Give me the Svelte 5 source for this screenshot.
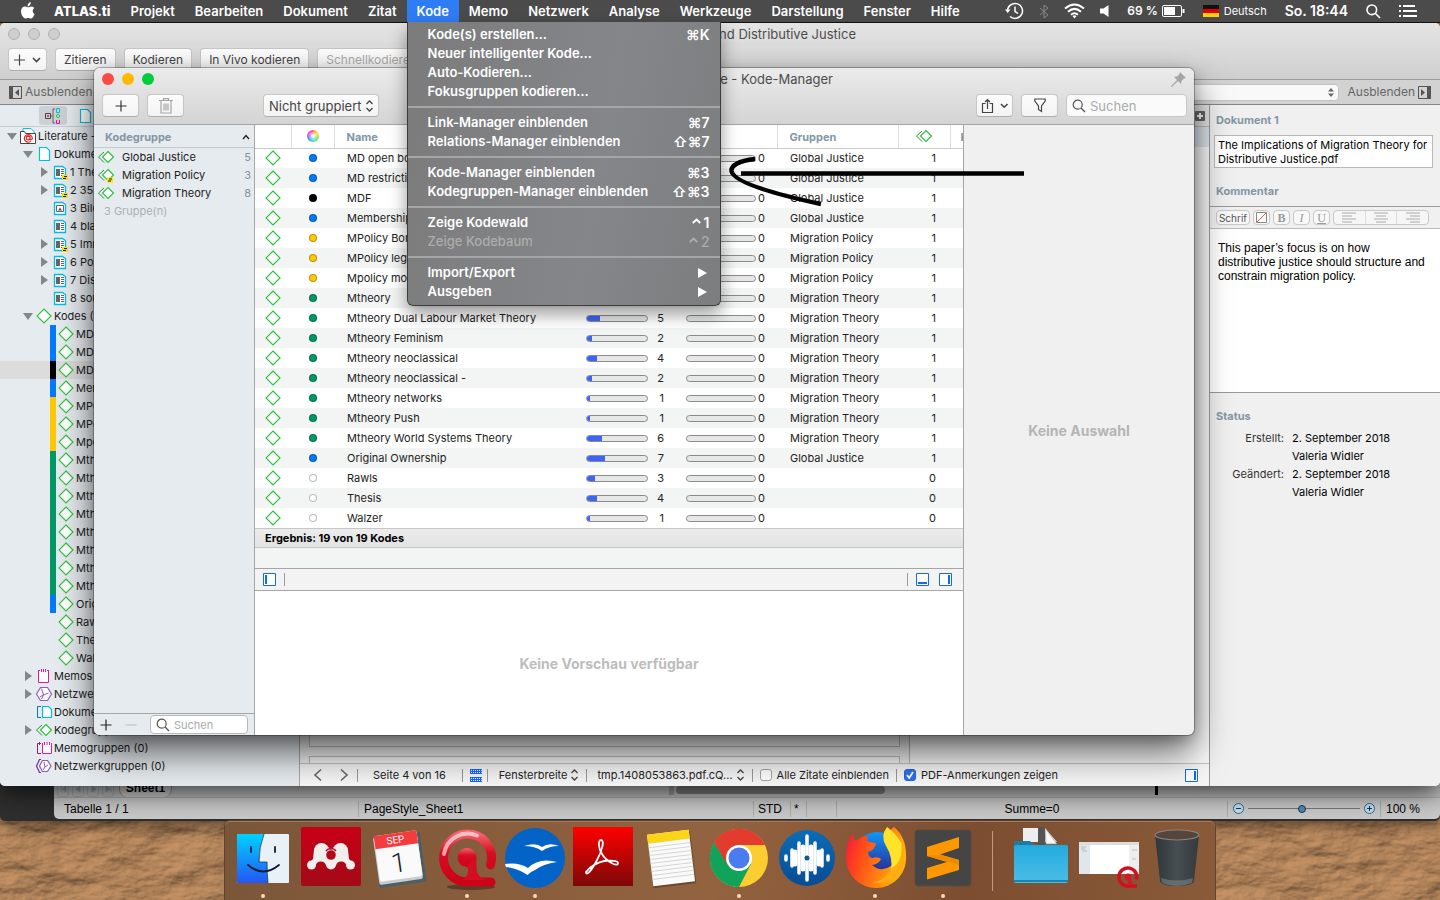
<script>
  const menusLeft = ['Projekt', 'Bearbeiten', 'Dokument', 'Zitat'];
  const menusRight = ['Memo', 'Netzwerk', 'Analyse', 'Werkzeuge', 'Darstellung', 'Fenster', 'Hilfe'];

  const menuGroups = [
    [
      { label: 'Kode(s) erstellen…', key: '⌘K' },
      { label: 'Neuer intelligenter Kode…' },
      { label: 'Auto-Kodieren…' },
      { label: 'Fokusgruppen kodieren…' }
    ],
    [
      { label: 'Link-Manager einblenden', key: '⌘7' },
      { label: 'Relations-Manager einblenden', key: '⇧⌘7' }
    ],
    [
      { label: 'Kode-Manager einblenden', key: '⌘3' },
      { label: 'Kodegruppen-Manager einblenden', key: '⇧⌘3' }
    ],
    [
      { label: 'Zeige Kodewald', caret: true, key: '1' },
      { label: 'Zeige Kodebaum', caret: true, key: '2', disabled: true }
    ],
    [
      { label: 'Import/Export', sub: true },
      { label: 'Ausgeben', sub: true }
    ]
  ];

  const blue = '#007aff';
  const green = '#009966';
  const yellow = '#ffc800';
  const GJ = 'Global Justice';
  const MP = 'Migration Policy';
  const MT = 'Migration Theory';

  const codes = [
    { name: 'MD open borders', color: blue, n: 5, group: GJ },
    { name: 'MD restrictions', color: blue, n: 4, group: GJ },
    { name: 'MDF', color: '#000000', n: 3, group: GJ },
    { name: 'Membership', color: blue, n: 2, group: GJ },
    { name: 'MPolicy Borders', color: yellow, n: 3, group: MP },
    { name: 'MPolicy legal', color: yellow, n: 2, group: MP },
    { name: 'Mpolicy moral', color: yellow, n: 4, group: MP },
    { name: 'Mtheory', color: green, n: 3, group: MT },
    { name: 'Mtheory Dual Labour Market Theory', color: green, n: 5, group: MT },
    { name: 'Mtheory Feminism', color: green, n: 2, group: MT },
    { name: 'Mtheory neoclassical', color: green, n: 4, group: MT },
    { name: 'Mtheory neoclassical -', color: green, n: 2, group: MT },
    { name: 'Mtheory networks', color: green, n: 1, group: MT },
    { name: 'Mtheory Push', color: green, n: 1, group: MT },
    { name: 'Mtheory World Systems Theory', color: green, n: 6, group: MT },
    { name: 'Original Ownership', color: blue, n: 7, group: GJ },
    { name: 'Rawls', color: '', n: 3, group: '' },
    { name: 'Thesis', color: '', n: 4, group: '' },
    { name: 'Walzer', color: '', n: 1, group: '' }
  ];

  const tree = [
    { level: 0, open: true, icon: 'project', label: 'Literature -' },
    { level: 1, open: true, icon: 'doc', label: 'Dokumente' },
    { level: 2, open: false, icon: 'pdfnote', label: '1 The' },
    { level: 2, open: false, icon: 'pdfnote', label: '2 35' },
    { level: 2, icon: 'image', label: '3 Bild' },
    { level: 2, icon: 'pdf', label: '4 blank' },
    { level: 2, open: false, icon: 'pdfnote', label: '5 Imm' },
    { level: 2, open: false, icon: 'pdf', label: '6 Pol' },
    { level: 2, open: false, icon: 'pdf', label: '7 Dist' },
    { level: 2, icon: 'pdf', label: '8 sou' },
    { level: 1, open: true, icon: 'code', label: 'Kodes (19)' },
    ...codes.map((c) => ({ code: true, icon: 'code', label: c.name, color: c.color, selected: c.name === 'MDF' })),
    { level: 1, open: false, icon: 'memo', label: 'Memos' },
    { level: 1, open: false, icon: 'network', label: 'Netzwerke' },
    { level: 1, icon: 'docgroup', label: 'Dokumentgruppen' },
    { level: 1, open: false, icon: 'codegroup', label: 'Kodegruppen (3)' },
    { level: 1, icon: 'memogroup', label: 'Memogruppen (0)' },
    { level: 1, icon: 'netgroup', label: 'Netzwerkgruppen (0)' }
  ];

  const groups = [
    { name: GJ, n: 5 },
    { name: MP, n: 3, note: true },
    { name: MT, n: 8 }
  ];

  const note = 'This paper’s focus is on how\ndistributive justice should structure and\nconstrain migration policy.';

  const dock = ['finder', 'mendeley', 'calendar', 'atlas', 'office', 'acrobat', 'notes', 'chrome', 'audio', 'firefox', 'sublime'];
  const running = ['finder', 'atlas', 'office', 'chrome', 'firefox', 'sublime'];
  const dockRight = ['folder', 'minimized', 'trash'];
</script>

{#snippet icon(kind)}
  <svg class="ico" width="18" height="18" viewBox="0 0 18 18" fill="none" stroke-width="1" aria-hidden="true">
    {#if kind === 'code'}
      <path d="M9 2 L16 9 L9 16 L2 9Z" fill="#fff" stroke="#2fc13c" stroke-width="1.1" />
    {:else if kind === 'codegroup' || kind === 'codegroupnote'}
      <path d="M7 4 L1.500 9 L7 14.500" stroke="#24903a" />
      <path d="M11 3.500 L16.500 9 L11 14.500 L5.500 9Z" fill="#fff" stroke="#2fc13c" stroke-width="1.200" />
      {#if kind === 'codegroupnote'}
        <path d="M10 11.500h6v5h-6z" fill="#ffe600" /><path d="M12 13h3M11 15h3" stroke="#222" />
      {/if}
    {:else if kind === 'project'}
      <path d="M4 6V1.500h8l3 3V6" fill="#fff" stroke="#00bfe6" />
      <path d="M1.500 16.500v-12h4l1 2h10v10z" fill="#fff" stroke="#444" />
      <path d="M12 14.200a4 3.800 0 1 1 1.300-3q0 1.500-1.200 1.500t-1-1.200V9.500M11 11a1.900 1.900 0 1 1-3.800 0 1.900 1.900 0 0 1 3.800 0" stroke="#e01818" stroke-width="1.100" />
    {:else if kind === 'doc'}
      <path d="M4.500 2.500h7l3 3v10h-10z" fill="#fff" stroke="#00bfe6" stroke-width="1.200" />
    {:else if kind === 'pdf' || kind === 'pdfnote'}
      <path d="M3.500 3.500h8l3 2v10h-11z" fill="#fff" stroke="#00bfe6" stroke-width="1.300" />
      <path d="M5 6h4v7h-4z" fill="#666" /><path d="M10 6.500h3M10 8.500h3M10 10.500h3M10 12.500h3" stroke="#666" />
      {#if kind === 'pdfnote'}
        <path d="M11 12h6v5h-6z" fill="#ffe600" /><path d="M13 13.500h3M12 15.500h3" stroke="#222" />
      {/if}
    {:else if kind === 'image'}
      <path d="M3.500 3.500h8l3 2v10h-11z" fill="#fff" stroke="#00bfe6" stroke-width="1.300" />
      <path d="M5.500 6.500h7v6h-7z" stroke="#666" /><path d="M7 11.500l2-3 2 3z" fill="#555" />
    {:else if kind === 'memo'}
      <path d="M3.500 3.500v12h10v-12M3 3.500h2M12 3.500h2M6.500 2v3M8.500 2v3M10.500 2v3" fill="#fff" stroke="#e0189a" />
    {:else if kind === 'network'}
      <path d="M5.500 2.500h7l4 6.500-4 6.500h-7L1.500 9z" fill="#fff" stroke="#8f5bbd" stroke-width="1.200" />
      <path d="M6.500 3.500l2 6.500M8.500 10l5-2M8.500 10l-2 4M5 12l3-2" stroke="#8f5bbd" />
    {:else if kind === 'docgroup'}
      <path d="M6 3.500H2.500v11H6" stroke="#087f9c" /><path d="M7.500 3.500h6l3 3v8h-9z" fill="#fff" stroke="#00bfe6" stroke-width="1.200" />
    {:else if kind === 'memogroup'}
      <path d="M6 4.500H2.500v10H6M4.500 3v3" stroke="#a01870" /><path d="M7.500 4v10.500h9V4M9.500 3v3M12 3v3M14.500 3v3" fill="#fff" stroke="#e0189a" />
    {:else if kind === 'netgroup'}
      <path d="M6 2.500H4.500L1.500 9l3 6.500H6" stroke="#6a2f96" stroke-width="1.200" />
      <path d="M7.500 3.500h5l3.500 5.500-3.500 5.500h-5L4.500 9z" fill="#fff" stroke="#8f5bbd" stroke-width="1.200" /><path d="M9 5l1 5 3-2M10 10l-2 3" stroke="#8f5bbd" />
    {/if}
  </svg>
{/snippet}

{#snippet chevrons()}
  <svg class="chev" width="9" height="14" viewBox="0 0 9 14" fill="none" stroke="#444" stroke-width="1.300" aria-hidden="true"><path d="M1.500 5L4.500 2l3 3M1.500 9l3 3 3-3" /></svg>
{/snippet}

{#snippet magnifier()}
  <svg width="14" height="14" viewBox="0 0 14 14" fill="none" stroke="#555" stroke-width="1.200" aria-hidden="true"><circle cx="5.700" cy="5.700" r="4.500" /><path d="M9 9l4 4" /></svg>
{/snippet}

{#snippet pane(kind)}
  <svg width="13" height="13" viewBox="0 0 13 13" fill="none" stroke="#1269f4" aria-hidden="true">
    <path d="M.5.5h12v12H.5z" fill="#fff" />
    {#if kind === 'left'}<path d="M3 2v9" stroke-width="2" />{:else if kind === 'bottom'}<path d="M2 10h9" stroke-width="2" />{:else}<path d="M10 2v9" stroke-width="2" />{/if}
  </svg>
{/snippet}

{#snippet app(kind)}
  <svg width="68" height="79" viewBox="0 0 68 79" aria-hidden="true">
    {#if kind === 'finder'}
      <rect x="8" y="13" width="52" height="49" rx="1" fill="#e8f0f8" />
      <path d="M9 13h26q-5 13-5 28h8q0 12 1 21H9q-1 0-1-1V14q0-1 1-1z" fill="url(#gFinder)" />
      <path d="M35 13q-5 13-5 28h8q0 12 1 21" fill="none" stroke="#17375e" stroke-width=".8" />
      <path d="M22 26v5M46 26v5M19 44q15 13 31 0" fill="none" stroke="#0c1c33" stroke-width="1.800" stroke-linecap="round" />
    {:else if kind === 'mendeley'}
      <rect x="4" y="6" width="60" height="59" rx="2" fill="url(#gMend)" />
      <g fill="#f1eeee"><circle cx="24.500" cy="29.500" r="7.500" /><circle cx="43.500" cy="29.500" r="7.500" /><circle cx="14.500" cy="44" r="4.500" /><circle cx="34" cy="43.500" r="5" /><circle cx="53.500" cy="44" r="4.500" /><path d="M17 29L16 38l-3 3 5 5q1-5 5-5.500 5-.5 6 4h10q1-4.500 6-4 4 .5 5 5.500l5-5-3-3-1-9-9-6-8 5-8-5z" /></g>
      <circle cx="34" cy="34" r="4.800" fill="#b4081a" />
      <path d="M29 30q2-3 5-2 3-1 5 2" fill="none" stroke="#b4081a" stroke-width="1.500" />
    {:else if kind === 'calendar'}
      <g transform="rotate(-8 34 37)"><rect x="11" y="14" width="47" height="50" fill="#4e5e66" /><rect x="11" y="13" width="44" height="48" rx="2" fill="#c8ccce" /><rect x="12" y="12" width="43" height="46" rx="2" fill="#fafafa" /><path d="M12 12h43v13H12z" fill="#f53b3e" /><text x="33" y="22" class="cal-month">SEP</text><text x="33" y="51" class="cal-day">1</text></g>
    {:else if kind === 'atlas'}
      <ellipse cx="38" cy="66" rx="24" ry="3" fill="#0005" />
      <path d="M57.500 44A24 24 0 1 0 34 61H58" fill="none" stroke="url(#gAtlas)" stroke-width="9" stroke-linecap="round" stroke-linejoin="round" />
      <circle cx="34" cy="36.500" r="9.500" fill="url(#gAtlas)" /><path d="M34 45q4 8-5 14h27q-12-1-12.500-12V36z" fill="#d50d22" />
      <path d="M11 33A24 24 0 0 1 44 14.500" fill="none" stroke="#fff9" stroke-width="4" stroke-linecap="round" />
    {:else if kind === 'office'}
      <circle cx="34" cy="37" r="30" fill="#0463c6" />
      <path d="M4 43Q18 41 27 47 38 36 56 41 42 43 34 49 29 51 26.500 54 18 48 5 46zM23 25Q35 21 41 26 48 21 58 25 48 25 41 30 34 25 23 25z" fill="#fff" />
    {:else if kind === 'acrobat'}
      <rect x="4" y="6" width="60" height="59" fill="url(#gAcro)" />
      <path d="M17 51c4-6 13-10 18-11 8-1 14 0 14 2 0 5-12-2-16-9-4-6-4-14-1-14 4 0 1 11-4 20-5 10-11 17-11 12z" fill="none" stroke="#fff" stroke-width="1.800" />
    {:else if kind === 'notes'}
      <g transform="rotate(-7 34 37)"><rect x="13" y="13" width="43" height="52" fill="#0004" /><rect x="13" y="11" width="42" height="52" fill="#fafafa" /><path d="M13 24h42M13 28h42M13 32h42M13 36h42M13 40h42M13 44h42M13 48h42M13 52h42M13 56h42" stroke="#d4d5d5" stroke-width="1" /><path d="M13 11h42v9H13z" fill="#f9d417" /></g>
    {:else if kind === 'chrome'}
      <circle cx="34" cy="37" r="29" fill="#fbcd31" />
      <path d="M34 37L9 22A29 29 0 0 1 60 24H34z" fill="#e33b2e" /><path d="M9 22A29 29 0 0 0 34 66L46 43 34 37 21 41z" fill="#12a35b" /><path d="M9 22l13 22 10-10z" fill="#e33b2e" /><path d="M9 22l13 22" stroke="#12a35b" /><circle cx="34" cy="37" r="13" fill="#fff" /><circle cx="34" cy="37" r="10.500" fill="#4a7cf0" />
    {:else if kind === 'audio'}
      <circle cx="34" cy="37" r="28" fill="url(#gAudio)" />
      <path d="M13 35v4M19 29v16M26 22v30M34 15v44M42 22v30M49 29v16M55 35v4" stroke="#fff" stroke-width="3.500" stroke-linecap="round" /><path d="M30 26v22M38 26v22M22 31v12M46 31v12" stroke="#fff" stroke-width="5" stroke-linecap="round" /><circle cx="34" cy="37" r="2.500" fill="#0c58a2" />
    {:else if kind === 'firefox'}
      <circle cx="36" cy="36" r="25" fill="url(#gGlobe)" />
      <path d="M12 12q0 7 3 8 5-5 12-5l-1 5q5 2 9 2-1 7-8 9 0 5 4 6 6-2 9 1-2 5-9 6 9 8 19 1 11-10 2-26-6-9 1-13 12 10 12 28A30 30 0 0 1 35 67 30 30 0 0 1 5 37q0-16 7-25z" fill="url(#gFox)" />
      <path d="M46 6q-7 9-1 19 7 11 5 24 12-7 11-26Q55 12 46 6z" fill="#ffe32b" /><path d="M51 47q12-7 9-25 7 18-3 32-11 11-27 7 14 0 21-14z" fill="#ffad13" />
    {:else if kind === 'sublime'}
      <rect x="6" y="9" width="56" height="56" rx="3" fill="#454545" stroke="#5c4a3d" />
      <path d="M18 26L50 16V27L31 33.500 50 39V49L18 58.500V47L38 41 18 35z" fill="#ff9800" /><path d="M31 33.500L50 39v5L18 35z" fill="#f08a00" />
    {:else if kind === 'folder'}
      <path d="M16 7h22l12 14H16z" fill="#eee" /><path d="M31 6h7v18h-7z" fill="#555" /><path d="M38 7l12 16H39z" fill="#f8f8f8" stroke="#888" stroke-width=".6" />
      <path d="M7 22q0-2 2-2h14l4 4h32q2 0 2 2v8H7z" fill="#217b9e" /><rect x="7" y="24" width="54" height="38" rx="2" fill="url(#gFolder)" /><path d="M7 60h54" stroke="#1887af" stroke-width="2" />
    {:else if kind === 'minimized'}
      <path d="M4 21h60v32H4z" fill="#fff" /><path d="M4 21h60v3H4z" fill="#ddd" /><path d="M4 24h11v29H4z" fill="#dfe7ec" /><path d="M54 24h10v29H54z" fill="#eee" /><path d="M6 26h5M6 28h4M7 30h5M57 29h5M57 38h4" stroke="#aaa" stroke-width=".7" />
      <path d="M61.500 58.500A9 9 0 1 0 53 65h9" fill="none" stroke="#cf1021" stroke-width="3.500" /><circle cx="53" cy="56" r="3.500" fill="#d91528" /><path d="M53 57q2 5-3 7h9q-3-2-3-7z" fill="#d91528" />
    {:else if kind === 'trash'}
      <path d="M12 14l5 46q1 5 17 5t17-5l5-46z" fill="url(#gTrash)" /><ellipse cx="34" cy="14" rx="22" ry="5" fill="#54453d" stroke="#8a8580" stroke-width="1.200" /><path d="M18 57q16 5 32 0l-1 5q-15 6-30 0z" fill="#8b979a" opacity=".45" />
    {/if}
  </svg>
{/snippet}

<main class="desktop">
  <svg class="wallpaper" aria-hidden="true" preserveAspectRatio="none">
    <defs>
      <filter id="rock" x="0" y="0" width="100%" height="100%" color-interpolation-filters="sRGB">
        <feTurbulence type="fractalNoise" baseFrequency=".022 .04" numOctaves="5" seed="21" result="n" />
        <feDiffuseLighting in="n" surfaceScale="4" lighting-color="#bd8c60" diffuseConstant="1.05"><feDistantLight azimuth="235" elevation="62" /></feDiffuseLighting>
      </filter>
      <linearGradient id="gFinder" x2="0" y2="1"><stop stop-color="#00d2ff" /><stop offset="1" stop-color="#2456f4" /></linearGradient>
      <linearGradient id="gMend" x2="0" y2="1"><stop stop-color="#c90017" /><stop offset="1" stop-color="#a20a17" /></linearGradient>
      <linearGradient id="gAtlas" x2="0" y2="1"><stop stop-color="#f4626d" /><stop offset=".4" stop-color="#d50d22" /><stop offset="1" stop-color="#cc0218" /></linearGradient>
      <linearGradient id="gAcro" x2="0" y2="1"><stop stop-color="#ff0000" /><stop offset="1" stop-color="#7c0808" /></linearGradient>
      <linearGradient id="gAudio" x2="0" y2="1"><stop stop-color="#0b6db5" /><stop offset="1" stop-color="#084c94" /></linearGradient>
      <linearGradient id="gGlobe" x2="0" y2="1"><stop stop-color="#1296f5" /><stop offset="1" stop-color="#30107c" /></linearGradient>
      <linearGradient id="gFox" x2="1" y2=".3"><stop stop-color="#f5123f" /><stop offset=".35" stop-color="#ff4a1a" /><stop offset="1" stop-color="#ffb10a" /></linearGradient>
      <linearGradient id="gFolder" x2="0" y2="1"><stop stop-color="#22abdf" /><stop offset="1" stop-color="#4dbde6" /></linearGradient>
      <linearGradient id="gTrash" x2="1" y2="0"><stop stop-color="#30373b" /><stop offset=".5" stop-color="#474e52" /><stop offset="1" stop-color="#33393d" /></linearGradient>
    </defs>
    <rect width="100%" height="100%" fill="#a67b51" />
    <rect width="100%" height="100%" filter="url(#rock)" />
  </svg>

  <div class="backdrop"></div>

  <section class="sheet-window" aria-label="Tabelle">
    <div class="sheet-tabs">
      {#each ['M3 3v6M8 3v6L4 6z', 'M7 3v6L3 6z', 'M4 3v6l4-3z', 'M8 3v6M3 3v6l4-3z'] as d}<span class="nav"><svg width="10" height="12" viewBox="0 0 10 12" fill="#999" stroke="#999" stroke-width=".8"><path {d} /></svg></span>{/each}
      <b class="tab">Sheet1</b>
      <span class="hscroll"><i></i></span>
      <span class="split"></span>
    </div>
    <footer class="sheet-status">
      <span class="s-table">Tabelle 1 / 1</span>
      <span class="s-style">PageStyle_Sheet1</span>
      <span class="s-std">STD</span>
      <span class="s-star">*</span>
      <span class="s-gap"></span>
      <span class="s-sum">Summe=0</span>
      <span class="s-zoom">
        <button class="round" aria-label="Verkleinern"><svg width="9" height="9" viewBox="0 0 9 9" stroke="#135"><path d="M2 4.500h5" /></svg></button>
        <input type="range" aria-label="Zoom" min="0" max="100" value="48" />
        <button class="round" aria-label="Vergrößern"><svg width="9" height="9" viewBox="0 0 9 9" stroke="#135"><path d="M2 4.500h5M4.500 2v5" /></svg></button>
      </span>
      <span class="s-pct">100 %</span>
    </footer>
  </section>

  <section class="window main-window" aria-label="Dokument">
    <header class="main-head">
      <div class="title-row"><span class="lights off"><i></i><i></i><i></i></span><h1>Theory and Distributive Justice</h1></div>
      <div class="tools">
        <button class="btn add" aria-label="Hinzufügen"><svg width="30" height="14" viewBox="0 0 30 14" fill="none" stroke="#444"><path d="M1 7h11M6.500 1.500v11" stroke-width="1.200" /><path d="M20 5l3.500 3.500L27 5" stroke-width="1.600" /></svg></button>
        <button class="btn">Zitieren</button>
        <button class="btn">Kodieren</button>
        <button class="btn">In Vivo kodieren</button>
        <button class="btn" disabled>Schnellkodieren</button>
      </div>
    </header>
    <div class="doc-bar">
      <button class="hide"><svg width="13" height="13" viewBox="0 0 13 13"><path d="M.5.5h12v12H.5z" fill="none" stroke="#555" /><path d="M0 0h4v13H0zM10 3v7L6 6.500z" fill="#555" /></svg>Ausblenden</button>
      <select class="doc-select" aria-label="Dokument wählen"><option></option></select>
      <button class="hide right">Ausblenden<svg width="13" height="13" viewBox="0 0 13 13"><path d="M.5.5h12v12H.5z" fill="none" stroke="#555" /><path d="M9 0h4v13H9zM3 3v7l4-3.500z" fill="#555" /></svg></button>
    </div>
    <div class="main-body">
      <nav class="tree-pane" aria-label="Projektbaum">
        <div class="tree-tabs">
          <span class="tree-tab on"><svg width="16" height="16" viewBox="0 0 16 16" fill="none"><path d="M.5 5.500h5v5h-5z" stroke="#444" /><circle cx="3" cy="8" r="1" fill="#e01818" /><path d="M6 8h2M10 1H8v14h2" stroke="#666" /><path d="M11.500.5h3v4h-3z" stroke="#00bfe6" /><path d="M13 6l2 2-2 2-2-2z" stroke="#2fc13c" /><path d="M11.500 12v3.500h3V12" stroke="#e0189a" /></svg></span>
          <span class="tree-tab">{@render icon('doc')}</span>
        </div>
        <ul class="tree">
          {#each tree as t}
            <li class:selected={t.selected} class={t.code ? 'leaf' : 'lv' + t.level}>
              {#if t.code}
                <span class="strip" style:background={t.color || 'transparent'}></span>
              {:else}
                <span class="disc">{#if t.open === true}<svg width="10" height="9" viewBox="0 0 10 9"><path d="M0 1h10L5 8z" fill="#858789" /></svg>{:else if t.open === false}<svg width="9" height="10" viewBox="0 0 9 10"><path d="M1 0v10l7-5z" fill="#858789" /></svg>{/if}</span>
              {/if}
              <span class="tico">{@render icon(t.icon)}</span><span>{t.label}</span>
            </li>
          {/each}
        </ul>
      </nav>

      <div class="doc-pane">
        <div class="doc-view">
          <div class="pages"><div class="page tall"></div><div class="page"></div></div>
          <div class="margin">
            <div class="margin-head"><svg width="10" height="10" viewBox="0 0 10 10"><rect width="10" height="10" rx="1" fill="#666" /><path d="M5 2v6M2 5h6" stroke="#fff" stroke-width="2" /></svg></div>
            <div class="margin-sel"></div>
          </div>
        </div>
        <footer class="doc-status">
          <button class="arrow" aria-label="Vorherige Seite"><svg width="9" height="14" viewBox="0 0 9 14" fill="none" stroke="#666" stroke-width="1.600"><path d="M8 1.500L2 7l6 5.500" /></svg></button>
          <button class="arrow" aria-label="Nächste Seite"><svg width="9" height="14" viewBox="0 0 9 14" fill="none" stroke="#666" stroke-width="1.600"><path d="M1 1.500L7 7l-6 5.500" /></svg></button>
          <span class="cell pg">Seite 4 von 16</span>
          <span class="cell fit"><svg width="12" height="13" viewBox="0 0 12 13"><path d="M0 0h12v5H0zM0 8h12v5H0z" fill="#1269f4" /><path d="M1 1.500h11M1 3.500h11M1 9.500h11M1 11.500h11" stroke="#fff" stroke-dasharray="1 1" /></svg></span>
          <button class="cell wide">Fensterbreite {@render chevrons()}</button>
          <button class="cell file"><span>tmp.1408053863.pdf.cQ...</span>{@render chevrons()}</button>
          <label class="cell chk"><input type="checkbox" />Alle Zitate einblenden</label>
          <label class="cell chk"><input type="checkbox" checked />PDF-Anmerkungen zeigen</label>
          <span class="push">{@render pane('right')}</span>
        </footer>
      </div>

      <aside class="inspector">
        <h2><label for="docname">Dokument 1</label></h2>
        <textarea id="docname" rows="2" value="The Implications of Migration Theory for Distributive Justice.pdf"></textarea>
        <h2 class="comment-head"><label for="comment">Kommentar</label></h2>
        <div class="format">
          <button class="fbtn font">Schrif</button>
          <button class="fbtn" aria-label="Farbe"><svg width="11" height="11" viewBox="0 0 11 11" fill="#fff" stroke="#888"><path d="M.5.5h10v10H.5z" /><path d="M1 10l9-9" stroke="#e55" /></svg></button>
          <button class="fbtn ser"><b>B</b></button>
          <button class="fbtn ser"><i>I</i></button>
          <button class="fbtn ser"><u>U</u></button>
          <span class="aligns">
            {#each ['M1 1h14M1 4h10M1 7h14M1 10h10', 'M1 1h14M3 4h10M1 7h14M3 10h10', 'M1 1h14M5 4h10M1 7h14M5 10h10'] as d, i}
              <button aria-label={['Links', 'Mitte', 'Rechts'][i]}><svg width="16" height="11" viewBox="0 0 16 11" stroke="#aaa"><path {d} /></svg></button>
            {/each}
          </span>
        </div>
        <textarea id="comment" class="comment" value={note}></textarea>
        <div class="status">
          <h2>Status</h2>
          <dl>
            <dt>Erstellt:</dt><dd>2. September 2018</dd><dd>Valeria Widler</dd>
            <dt>Geändert:</dt><dd>2. September 2018</dd><dd>Valeria Widler</dd>
          </dl>
        </div>
      </aside>
    </div>
  </section>

  <section class="window manager" aria-label="Kode-Manager">
    <header class="mgr-head">
      <div class="title-row"><span class="lights"><i></i><i></i><i></i></span><h1>Literature - Kode-Manager</h1>
        <svg class="pin" width="15" height="15" viewBox="0 0 15 15" fill="#a5a5a5"><path d="M9 0l6 6-2 .5-2.500 2.500-.5 3-3-3L.8 15 0 14.200 6 8 3 5l3-.5L8.500 2z" /></svg>
      </div>
      <div class="tools">
        <button class="btn w37" aria-label="Neuer Kode"><svg width="12" height="12" viewBox="0 0 12 12" stroke="#333" stroke-width="1.200"><path d="M.5 6h11M6 .5v11" /></svg></button>
        <button class="btn w37" aria-label="Löschen"><svg width="14" height="16" viewBox="0 0 14 16" fill="none" stroke="#a5a5a5" stroke-width="1.200"><path d="M0 2.500h14M4.500 2V.600h5V2M2 2.500V15h10V2.500M5 5.500v7M7 5.500v7M9 5.500v7" /></svg></button>
        <button class="btn group-by">Nicht gruppiert {@render chevrons()}</button>
        <span class="grow"></span>
        <button class="btn w37" aria-label="Teilen"><svg width="28" height="16" viewBox="0 0 28 16" fill="none" stroke="#444"><path d="M4.500 5.500h-3v9h10v-9h-3M6.500 11V1.500M4 4l2.500-2.500L9 4" stroke-width="1.200" /><path d="M20 6l3.200 3.200L26.500 6" stroke-width="1.600" /></svg></button>
        <button class="btn w37" aria-label="Filter"><svg width="12" height="15" viewBox="0 0 12 15" fill="none" stroke="#444" stroke-width="1.200"><path d="M.8 1h10.400v2L7.500 8v5.500l-3-2V8L.8 3z" /></svg></button>
        <label class="search">{@render magnifier()}<input type="search" placeholder="Suchen" aria-label="Kodes suchen" /></label>
      </div>
    </header>
    <div class="mgr-body">
      <aside class="groups">
        <div class="groups-head">Kodegruppe<svg width="8" height="6" viewBox="0 0 8 6" fill="none" stroke="#222" stroke-width="1.400"><path d="M1 5l3-3.500L7 5" /></svg></div>
        <ul>
          {#each groups as g}
            <li>{@render icon(g.note ? 'codegroupnote' : 'codegroup')}<span>{g.name}</span><em>{g.n}</em></li>
          {/each}
          <li class="count">3 Gruppe(n)</li>
        </ul>
        <footer>
          <button aria-label="Gruppe hinzufügen"><svg width="12" height="12" viewBox="0 0 12 12" stroke="#222" stroke-width="1.200"><path d="M.5 6h11M6 .5v11" /></svg></button>
          <button aria-label="Gruppe entfernen"><svg width="12" height="12" viewBox="0 0 12 12" stroke="#bbb"><path d="M.5 6h11" /></svg></button>
          <label class="small-search">{@render magnifier()}<input type="search" placeholder="Suchen" aria-label="Gruppen suchen" /></label>
        </footer>
      </aside>

      <div class="center">
        <table>
          <colgroup><col class="c-icon" /><col class="c-color" /><col class="c-name" /><col class="c-num" /><col class="c-dens" /><col class="c-group" /><col class="c-cnt" /><col class="c-rest" /></colgroup>
          <thead>
            <tr><th></th><th class="mid"><span class="wheel"></span></th><th>Name</th><th></th><th></th><th>Gruppen</th><th class="mid">{@render icon('codegroup')}</th><th class="last">K</th></tr>
          </thead>
          <tbody>
            {#each codes as c}
              <tr>
                <td class="mid">{@render icon('code')}</td>
                <td class="mid"><span class="dot" class:none={!c.color} style:background={c.color || '#ffffff'}></span></td>
                <td>{c.name}</td>
                <td class="bars"><span><i class="bar"><i style:width={c.n * 4.2 + '%'}></i></i>{c.n}</span></td>
                <td class="bars second"><span><i class="bar"></i>0</span></td>
                <td>{c.group}</td>
                <td class="num">{c.group ? 1 : 0}</td>
                <td></td>
              </tr>
            {/each}
          </tbody>
        </table>
        <div class="result">Ergebnis: 19 von 19 Kodes</div>
        <div class="blank"></div>
        <div class="pane-bar"><span>{@render pane('left')}</span><hr /><span class="grow"></span><hr /><span>{@render pane('bottom')}</span><span>{@render pane('right')}</span></div>
        <div class="preview">Keine Vorschau verfügbar</div>
      </div>
      <aside class="selection">Keine Auswahl</aside>
    </div>
  </section>

  <svg class="pointer" width="310" height="64" viewBox="0 0 310 64" fill="none" stroke="#000" stroke-width="4.500" aria-hidden="true"><path d="M35 9C18 11 11 16 11.500 21C13 31 45 42 101 54M21 23.500H304" /></svg>

  <header class="menubar">
    <nav>
      <svg class="apple" width="14" height="17" viewBox="0 0 14 17" fill="#fff"><path d="M9.800 0q.2 2-1 3.200T6.600 4.400Q6.400 2.800 7.500 1.500T9.800 0zM13.500 12.200q-1.800 4.300-3.700 4.300c-1 0-1.500-.6-2.600-.6s-1.700.6-2.600.6C2.300 16.500 0 12.500 0 9.300c0-3 1.900-4.800 4-4.800 1.200 0 2.200.8 3.100.8s2.200-.9 3.500-.9q1.800.1 2.800 1.600-1.800 1.200-1.700 3.100t1.800 3.100z" /></svg>
      <button class="brand">ATLAS.ti</button>
      {#each menusLeft as m}<button>{m}</button>{/each}
      <span class="open-menu">
        <button class="active" aria-expanded="true">Kode</button>
        <div class="menu" role="menu">
          {#each menuGroups as g, gi}
            {#if gi > 0}<hr />{/if}
            {#each g as m}
              <button role="menuitem" disabled={m.disabled}><span>{m.label}</span>
                {#if m.sub}<svg width="9" height="10" viewBox="0 0 9 10" fill="#fff"><path d="M0 0l9 5-9 5z" /></svg>{:else if m.key}<kbd>{#if m.caret}<svg width="9" height="10" viewBox="0 0 9 10" fill="none" stroke="currentColor" stroke-width="1.800"><path d="M.8 5l3.700-3.500L8.200 5" /></svg>{/if}{m.key}</kbd>{/if}
              </button>
            {/each}
          {/each}
        </div>
      </span>
      {#each menusRight as m}<button>{m}</button>{/each}
    </nav>
    <div class="tray">
      <div class="tray-icons">
        <svg width="19" height="18" viewBox="0 0 19 18" fill="none" stroke="#fff" stroke-width="1.500"><path d="M2.500 9A7.500 7.500 0 1 1 5 14.500M10 4.500V9.500l3 2" /><path d="M0 7.500h5.500L2.700 11z" fill="#fff" stroke="none" /></svg>
        <svg width="10" height="15" viewBox="0 0 10 15" fill="none" stroke="#888"><path d="M1 4l8 7-4 3V1l4 3-8 7" /></svg>
        <svg width="21" height="16" viewBox="0 0 21 16" fill="none" stroke="#fff" stroke-width="2"><path d="M1 5.500Q10.500-2.500 20 5.500M4 8.700Q10.500 3 17 8.700M7 11.700q3.500-3 7 0" /><path d="M8.500 13l2 2.500 2-2.500q-2-1.500-4 0z" fill="#fff" stroke="none" /></svg>
        <svg width="9" height="12" viewBox="0 0 9 12" fill="#fff"><path d="M0 3.500h3.500L8.500 0v12L3.500 8.500H0z" /></svg>
      </div>
      <span class="battery">69 %<svg width="23" height="12" viewBox="0 0 23 12" fill="none" stroke="#fff"><rect x=".5" y=".5" width="19" height="11" rx="1.500" /><path d="M2 2h11v8H2z" fill="#fff" stroke="none" /><path d="M21.500 4v4" stroke-width="2" /></svg></span>
      <span class="lang"><i class="flag"></i>Deutsch</span>
      <span class="clock">So. 18:44</span>
      <svg width="15" height="15" viewBox="0 0 15 15" fill="none" stroke="#fff" stroke-width="1.600"><circle cx="5.800" cy="5.800" r="4.800" /><path d="M9.500 9.500l4.500 4.500" /></svg>
      <svg width="18" height="12" viewBox="0 0 18 12" stroke="#fff" stroke-width="2"><path d="M0 1h2M4 1h12M0 6h2M4 6h14M0 11h2M4 11h14" /></svg>
    </div>
  </header>

  <footer class="dock">
    {#each dock as d}<span class="slot">{@render app(d)}{#if running.includes(d)}<i class="run"></i>{/if}</span>{/each}
    <span class="divider"></span>
    {#each dockRight as d}<span class="slot">{@render app(d)}</span>{/each}
  </footer>
</main>

<style>
  :global(body) { margin: 0; }
  * { box-sizing: border-box; }
  .desktop { position: relative; min-height: 100vh; overflow: hidden; font: 11px/14px Inter, 'Liberation Sans', sans-serif; color: #222; background: #a67b51; }
  button, input, select, textarea { font: inherit; color: inherit; margin: 0; padding: 0; border: 0; background: none; outline: none; }
  ul, dl, dd, h1, h2 { margin: 0; padding: 0; list-style: none; font-size: inherit; }
  svg { display: block; flex: none; }
  .grow { flex: 1; }
  .wallpaper { position: absolute; left: 0; bottom: 0; width: 100%; height: 120px; }

  .menubar { position: absolute; inset: 0 0 auto; height: 23px; display: flex; justify-content: space-between; background: #4b4b4c; border-bottom: 1px solid #111; color: #fff; font-size: 13px; font-weight: 600; line-height: 22px; }
  .menubar nav { display: flex; align-items: flex-start; }
  .menubar nav > button, .open-menu > button { padding: 0 10px; height: 22px; white-space: nowrap; }
  .apple { margin: 2px 9px 0 21px; }
  .menubar nav > .brand { font-weight: 800; }
  .open-menu { position: relative; }
  .open-menu > .active { background: #2f7df6; }
  .menu { position: absolute; left: 0; top: 22px; width: 314px; padding: 3px 0 4px; background: linear-gradient(100deg, #7b7b7b, #85868a 60%, #7c7d7e); border: 1px solid #3c3c3c; border-top: 0; border-radius: 0 0 6px 6px; box-shadow: 0 8px 18px #0006; }
  .menu button { display: flex; align-items: center; justify-content: space-between; width: 100%; height: 19px; padding: 0 10px 0 20px; text-align: left; line-height: 19px; white-space: nowrap; }
  .menu button:disabled { color: #adadad; font-weight: 500; }
  .menu button > svg { margin-right: 3px; }
  .menu hr { height: 2px; margin: 5px 0; border: 0; background: #a4a5a6; }
  kbd { display: flex; align-items: center; gap: 3px; font: inherit; font-size: 14px; }
  .tray { display: flex; align-items: center; gap: 18px; padding-right: 23px; white-space: nowrap; }
  .tray-icons { display: flex; align-items: center; gap: 15px; }
  .battery, .lang { display: flex; align-items: center; gap: 4px; font-size: 12px; }
  .lang { font-size: 11px; font-weight: 400; gap: 5px; }
  .clock { font-size: 14px; }
  .flag { width: 16px; height: 12px; background: linear-gradient(#111 33%, #e00000 33% 66%, #ffce00 66%); }

  .window { position: absolute; display: flex; flex-direction: column; overflow: hidden; }
  .main-window { inset: 23px 0 114px; border-radius: 5px; background: #f0f0f0; box-shadow: 0 6px 26px #000b; }
  .manager { top: 68px; bottom: 165px; left: 94px; width: calc(100% - 340px); border-radius: 6px; background: #f0f0f0; box-shadow: 0 0 0 1px #0004, 0 18px 36px #0009, 0 4px 14px #0003; }
  .title-row { display: flex; align-items: center; height: 22px; padding: 0 8px; }
  .title-row h1 { flex: 1; text-align: right; font-size: 13px; font-weight: 400; color: #4d4d4d; white-space: nowrap; }
  .main-head .title-row h1 { padding-right: 576px; }
  .mgr-head .title-row h1 { padding-right: 338px; }
  .lights { display: flex; gap: 8px; }
  .lights i { width: 12px; height: 12px; border-radius: 50%; background: #ff4a43; }
  .lights i:nth-child(2) { background: #ffba00; }
  .lights i:nth-child(3) { background: #00cc3e; }
  .lights.off i { background: #cfcfcf; border: 1px solid #b2b2b2; }
  .main-head { height: 57px; background: linear-gradient(#e4e4e4, #cfcfcf); border-bottom: 1px solid #9c9c9c; }
  .mgr-head { height: 57px; background: linear-gradient(#ebebeb, #d4d4d4); border-bottom: 1px solid #a5a5a5; }
  .tools { display: flex; align-items: center; gap: 8px; padding: 3px 8px 0; }
  .btn { display: flex; align-items: center; justify-content: center; height: 23px; padding: 0 8px; border: 1px solid #c6c6c6; border-bottom-color: #adadad; border-radius: 4px; background: linear-gradient(#fcfcfc, #f3f3f3); font-size: 13px; color: #444; white-space: nowrap; }
  .main-head .btn { font-size: 12px; }
  .btn:disabled { color: #aaa; }
  .main-head .add { width: 39px; padding: 0; }
  .w37 { width: 37px; padding: 0; }
  .group-by { margin-left: 71px; padding: 0 4px 0 5px; gap: 3px; }
  .search { display: flex; align-items: center; gap: 4px; width: 121px; height: 23px; padding: 0 5px; border: 1px solid #c6c6c6; border-radius: 4px; background: #fafafa; font-size: 13px; }
  .mgr-head .tools { padding-top: 4px; padding-right: 7px; }
  .search input, .small-search input { width: 100%; min-width: 0; }
  input::placeholder { color: #aaa; opacity: 1; }

  .doc-bar { display: flex; align-items: center; height: 25px; background: #d2d2d2; border-bottom: 1px solid #858585; color: #666; }
  .hide { display: flex; align-items: center; gap: 3px; padding: 0 9px; font-size: 12px; }
  .doc-select { flex: 1; height: 17px; margin-left: 200px; appearance: none; border: 1px solid #c2c2c2; border-radius: 4px; background: url("data:image/svg+xml,%3Csvg xmlns='http://www.w3.org/2000/svg' width='6' height='9'%3E%3Cpath d='M0 3.500L3 0l3 3.500zM0 5.500h6L3 9z' fill='%23666'/%3E%3C/svg%3E") no-repeat right 4px center #f9f9f9; }
  .main-body { flex: 1; min-height: 0; display: flex; }
  .tree-pane { width: 300px; background: #e6ebef; border-right: 1px solid #a6a6a6; }
  .tree-tabs { display: flex; gap: 4px; height: 22px; padding: 1px 39px; border-bottom: 1px solid #c8cdd1; }
  .tree-tab { display: grid; place-items: center; width: 28px; height: 19px; border-radius: 3px; }
  .tree-tab.on { background: #cbd0d4; }
  .tree li { display: flex; align-items: center; height: 18px; white-space: nowrap; }
  .tree li.selected { background: #dcdcdc; }
  .lv0 { padding-left: 6px; }
  .lv1 { padding-left: 22px; }
  .lv2 { padding-left: 38px; }
  .leaf { padding-left: 50px; }
  .strip { width: 6px; height: 18px; }
  .disc { display: grid; place-items: center; width: 12px; }
  .tico { display: grid; place-items: center; width: 20px; }

  .doc-pane { flex: 1; min-width: 0; display: flex; flex-direction: column; background: #f3f3f3; }
  .doc-view { flex: 1; display: flex; min-height: 0; }
  .pages { flex: 1; display: flex; flex-direction: column; gap: 9px; padding: 0 9px; }
  .page { height: 7px; border: 1px solid #bcbcbc; border-bottom: 0; background: #fafafa; }
  .page.tall { flex: 1; border-bottom: 1px solid #bcbcbc; }
  .margin { width: 300px; border-left: 1px solid #b5b5b5; background: #fafafa; }
  .margin-head { display: flex; justify-content: flex-end; align-items: center; height: 22px; padding-right: 4px; border-bottom: 1px solid #bbb; background: #e6e6e6; }
  .margin-sel { height: 20px; background: #dfe6ee; }
  .doc-status { display: flex; align-items: center; height: 23px; padding: 0 11px 0 13px; border-top: 1px solid #c4c4c4; background: #f6f6f6; white-space: nowrap; }
  .arrow { width: 27px; display: flex; }
  .arrow + .arrow { width: 17px; }
  .cell { position: relative; display: flex; align-items: center; gap: 3px; height: 13px; padding: 0 7px 0 11px; border-left: 1px solid #999; }
  .pg { padding: 0 16px 0 15px; }
  .fit { padding: 0 5px 0 7px; }
  .file { padding: 0 7px 0 10px; }
  .chk { gap: 5px; padding: 0 7px; }
  .chk input { appearance: none; width: 12px; height: 12px; border: 1px solid #a5a5a5; border-radius: 3px; background: #fff; }
  .chk input:checked { border-color: #1e66e8; background: url("data:image/svg+xml,%3Csvg xmlns='http://www.w3.org/2000/svg' width='10' height='10' fill='none' stroke='white' stroke-width='1.800'%3E%3Cpath d='M2 5l2.200 3L8 2'/%3E%3C/svg%3E") center no-repeat #2e70f2; }
  .push { margin-left: auto; }

  .inspector { display: flex; flex-direction: column; width: 231px; border-left: 1px solid #999; background: #f0f0f0; color: #000; }
  .inspector h2 { padding: 8px 6px; font-weight: 700; color: #8496a5; }
  textarea { display: block; resize: none; overflow: hidden; }
  #docname { height: 33px; margin: 0 7px 0 4px; padding: 2px 3px; border: 1px solid #b8b8b8; background: #fff; }
  .inspector .comment-head { padding-top: 16px; }
  .format { display: flex; align-items: center; gap: 3px; height: 23px; padding: 0 6px; border-top: 1px solid #999; border-bottom: 1px solid #bbb; }
  .fbtn { display: grid; place-items: center; width: 17px; height: 15px; border: 1px solid #c8c8c8; border-radius: 4px; background: #f8f8f8; font-size: 10px; color: #555; line-height: 12px; }
  .fbtn.font { width: 34px; }
  .fbtn.ser { font-family: 'Liberation Serif', serif; font-size: 12px; color: #999; }
  .aligns { display: flex; flex: 1; height: 15px; margin-right: 5px; border: 1px solid #c8c8c8; border-radius: 4px; background: #f6f6f6; }
  .aligns button { flex: 1; display: grid; place-items: center; border-left: 1px solid #ddd; }
  .aligns button:first-child { border: 0; }
  .comment { height: 163px; padding: 12px 0 12px 8px; background: #fff; font: 12px/14px 'Liberation Sans', Arial, sans-serif; }
  .status { border-top: 1px solid #999; padding-top: 8px; }
  .inspector .status h2 { padding-bottom: 6px; }
  dl { display: grid; grid-template-columns: 74px 1fr; column-gap: 8px; line-height: 18px; }
  dt { text-align: right; color: #333; }
  dd { grid-column: 2; }

  .mgr-body { flex: 1; min-height: 0; display: flex; }
  .groups { display: flex; flex-direction: column; width: 161px; border-right: 1px solid #a6a6a6; background: #e6ebef; }
  .groups-head { display: flex; justify-content: space-between; align-items: center; height: 23px; padding: 1px 4px 0 11px; border-bottom: 1px solid #c5cacd; font-weight: 700; color: #8496a5; }
  .groups ul { flex: 1; }
  .groups li { display: flex; align-items: center; gap: 7px; height: 18px; padding: 0 3px; }
  .groups em { margin-left: auto; font-style: normal; color: #8a9096; }
  .groups li.count { padding-left: 10px; color: #aab0b5; }
  .groups footer { display: flex; align-items: center; gap: 13px; height: 22px; padding: 0 6px; border-top: 1px solid #a6a6a6; }
  .small-search { display: flex; align-items: center; gap: 4px; flex: 1; height: 19px; padding: 0 5px; border: 1px solid #b8b8b8; border-radius: 4px; background: #fff; }

  .center { flex: 1; min-width: 0; display: flex; flex-direction: column; background: #fff; }
  table { width: 100%; table-layout: fixed; border-collapse: collapse; }
  .c-icon { width: 36px; } .c-color { width: 43px; } .c-num { width: 100px; } .c-dens { width: 103px; } .c-group { width: 121px; } .c-cnt { width: 52px; } .c-rest { width: 13px; }
  th { height: 23px; padding: 2px 0 0 12px; border-right: 1px solid #ddd; border-bottom: 1px solid #ccc; text-align: left; font-weight: 700; color: #8496a5; overflow: hidden; }
  th.last { padding-left: 10px; border-right: 0; }
  th.mid, td.mid { padding: 0; text-align: center; }
  .mid :global(svg), .mid .dot, .wheel { margin: 0 auto; }
  td { height: 20px; padding: 0 0 0 13px; overflow: hidden; white-space: nowrap; }
  tbody tr:nth-child(even) { background: #f3f5f5; }
  .wheel { display: block; width: 12px; height: 12px; border-radius: 50%; background: radial-gradient(#fff, #fff0 60%), conic-gradient(#f85, #fd4, #6e6, #4dd, #58f, #d5e, #f56); }
  .dot { display: block; width: 8px; height: 8px; border-radius: 50%; border: 1px solid #0004; }
  td.bars { padding-left: 12px; }
  .bars > span { display: flex; align-items: center; justify-content: space-between; padding-right: 10px; }
  .bar { display: block; width: 62px; height: 7px; overflow: hidden; border: 1px solid #8a8a8a; border-radius: 4px; background: #e6e7e7; }
  .bar i { display: block; height: 5px; background: #3c63fa; }
  .second > span { padding-right: 12px; }
  .second .bar { width: 70px; }
  td.num { padding-right: 14px; text-align: right; }
  .result { height: 20px; padding: 0 10px; border-top: 1px solid #c6c6c6; border-bottom: 1px solid #c6c6c6; background: linear-gradient(#ededed, #e2e2e2); font-weight: 700; line-height: 18px; color: #000; }
  .blank { height: 20px; background: #f3f5f5; }
  .pane-bar { display: flex; align-items: center; gap: 8px; height: 23px; padding: 0 11px 0 8px; border-top: 1px solid #a6a6a6; border-bottom: 1px solid #a6a6a6; background: #f3f3f3; }
  .pane-bar hr { width: 1px; height: 13px; margin: 0; border: 0; background: #999; }
  .pane-bar span:last-child { margin-left: 2px; }
  .preview { flex: 1; display: grid; place-items: center; padding-top: 2px; font-size: 14px; font-weight: 700; color: #bdbdbd; }
  .selection { display: grid; place-items: center; width: 231px; padding-top: 2px; border-left: 1px solid #a6a6a6; font-size: 14px; font-weight: 700; color: #b5b5b5; }

  .pointer { position: absolute; left: 720px; top: 150px; }

  .backdrop { position: absolute; left: 0; right: 0; bottom: 79px; height: 60px; border-radius: 0 0 5px 5px; background: #2e2e2e; box-shadow: 0 4px 14px #0008; }
  .sheet-window { position: absolute; left: 54px; right: 0; bottom: 81px; border-radius: 0 0 5px 5px; overflow: hidden; background: #c8c8c8; color: #000; font: 12px/20px 'Liberation Sans', Arial, sans-serif; }
  .sheet-tabs { display: flex; align-items: center; height: 18px; padding-left: 3px; background: #bdbdbd; border-bottom: 1px solid #aaa; gap: 3px; }
  .nav { width: 12px; height: 16px; display: grid; place-items: center; border: 1px solid #aaa; border-radius: 3px; }
  .tab { width: 53px; margin-left: 2px; border: 1px solid #888; border-width: 0 1px; border-radius: 0 0 8px 8px; background: #ccc; text-align: center; line-height: 17px; }
  .hscroll { width: 216px; height: 13px; margin-left: 494px; border-left: 5px solid #999; }
  .hscroll i { display: block; width: 209px; height: 8px; margin: 4px 0 0 2px; border-radius: 4px; background: #7d7d7d; }
  .split { width: 3px; height: 12px; margin-left: 267px; background: #000; }
  .sheet-status { display: flex; align-items: center; height: 21px; }
  .sheet-status > span { height: 16px; line-height: 17px; border-right: 1px solid #aaa; white-space: nowrap; }
  .s-table { width: 305px; padding-left: 10px; }
  .s-style { width: 395px; padding-left: 5px; }
  .s-std { width: 37px; padding-left: 4px; }
  .s-star { width: 16px; padding-left: 3px; }
  .s-gap { width: 30px; }
  .s-sum { flex: 1; text-align: center; }
  .sheet-status .s-zoom { display: flex; align-items: center; gap: 4px; width: 153px; padding: 0 5px; }
  .sheet-status .s-pct { width: 59px; padding-left: 5px; border: 0; }
  .round { width: 11px; height: 11px; flex: none; border: 1px solid #35658a; border-radius: 50%; background: #bfe0f3; }
  .s-zoom input { appearance: none; flex: 1; min-width: 0; height: 10px; background: linear-gradient(#777, #777) center / 100% 1px no-repeat; }
  .s-zoom input::-webkit-slider-thumb { appearance: none; width: 8px; height: 8px; border: 1px solid #234; border-radius: 50%; background: #4a8fb8; }

  .dock { position: absolute; left: 50%; bottom: 0; display: flex; padding: 0 4px; height: 79px; transform: translateX(-50%); border-radius: 5px 5px 0 0; box-shadow: 0 0 0 1px #5e4430, inset 0 1px #a07a5a; background: linear-gradient(100deg, #7a5638, #936340 50%, #7c4d30 75%, #8a5b39); }
  .slot { position: relative; width: 68px; }
  .run { position: absolute; left: 32px; top: 73px; width: 4px; height: 4px; border-radius: 50%; background: #ffdcb8; }
  .divider { width: 1px; height: 60px; margin: 10px 14px 0 15px; background: #c59a78; }
  :global(.cal-month) { font: 10px Roboto, sans-serif; fill: #fff; text-anchor: middle; }
  :global(.cal-day) { font: 300 27px Roboto, sans-serif; fill: #222; text-anchor: middle; }
</style>
